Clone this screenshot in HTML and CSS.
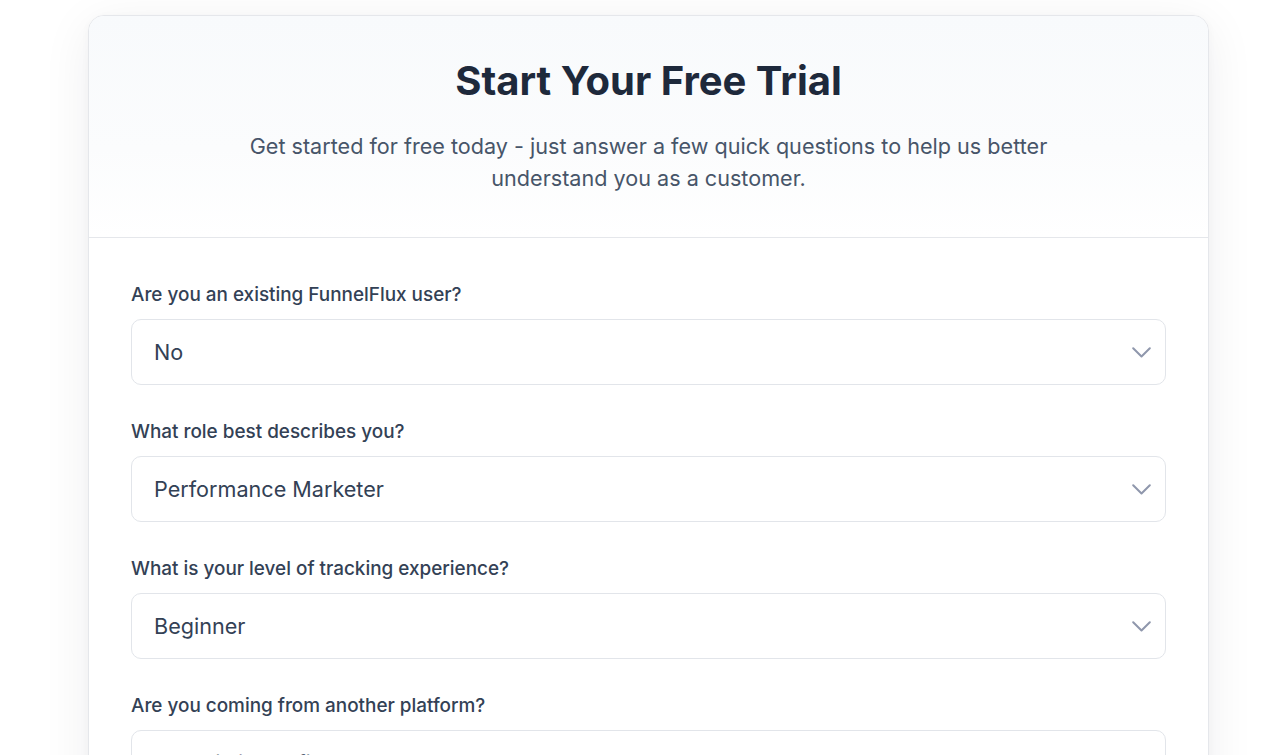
FILE: index.html
```html
<!DOCTYPE html>
<html lang="en">
<head>
<meta charset="utf-8">
<title>Start Your Free Trial</title>
<link rel="stylesheet" href="styles.css">
</head>
<body>
<div class="page">
  <div class="card">
    <header class="card-header">
      <h1 class="title">Start Your Free Trial</h1>
      <p class="subtitle">Get started for free today - just answer a few quick questions to help us better understand you as a customer.</p>
    </header>
    <form class="card-body">
      <div class="field">
        <label class="label" for="q1">Are you an existing FunnelFlux user?</label>
        <div class="select-wrap">
          <select id="q1" class="select">
            <option>No</option>
            <option>Yes</option>
          </select>
          <svg class="chevron" width="19" height="11" viewBox="0 0 19 11"><path d="M1.2 1.2 L9.5 9.5 L17.8 1.2" fill="none" stroke="currentColor" stroke-width="2" stroke-linecap="round" stroke-linejoin="round"/></svg>
        </div>
      </div>
      <div class="field">
        <label class="label" for="q2">What role best describes you?</label>
        <div class="select-wrap">
          <select id="q2" class="select">
            <option>Performance Marketer</option>
            <option>Agency</option>
          </select>
          <svg class="chevron" width="19" height="11" viewBox="0 0 19 11"><path d="M1.2 1.2 L9.5 9.5 L17.8 1.2" fill="none" stroke="currentColor" stroke-width="2" stroke-linecap="round" stroke-linejoin="round"/></svg>
        </div>
      </div>
      <div class="field">
        <label class="label" for="q3">What is your level of tracking experience?</label>
        <div class="select-wrap">
          <select id="q3" class="select">
            <option>Beginner</option>
            <option>Intermediate</option>
            <option>Advanced</option>
          </select>
          <svg class="chevron" width="19" height="11" viewBox="0 0 19 11"><path d="M1.2 1.2 L9.5 9.5 L17.8 1.2" fill="none" stroke="currentColor" stroke-width="2" stroke-linecap="round" stroke-linejoin="round"/></svg>
        </div>
      </div>
      <div class="field">
        <label class="label" for="q4">Are you coming from another platform?</label>
        <div class="select-wrap">
          <select id="q4" class="select">
            <option>No, this is my first tracker</option>
            <option>Yes</option>
          </select>
          <svg class="chevron" width="19" height="11" viewBox="0 0 19 11"><path d="M1.2 1.2 L9.5 9.5 L17.8 1.2" fill="none" stroke="currentColor" stroke-width="2" stroke-linecap="round" stroke-linejoin="round"/></svg>
        </div>
      </div>
    </form>
  </div>
</div>
</body>
</html>
```

FILE: styles.css
```css
* { box-sizing: border-box; }

html, body {
  margin: 0;
  padding: 0;
  background: #ffffff;
  font-family: "Inter", "Noto Sans", "Liberation Sans", sans-serif;
  color: #334155;
}

.page {
  padding: 15px 72px 40px 88px;
}

.card {
  background: #ffffff;
  border: 1px solid #e5e7eb;
  border-radius: 16px;
  box-shadow: 0 10px 50px rgba(15, 23, 42, 0.07), 0 2px 8px rgba(15, 23, 42, 0.03);
  overflow: hidden;
}

.card-header {
  padding: 45px 40px 43px;
  text-align: center;
  background: linear-gradient(180deg, #f8fafc 0%, #fbfcfd 60%, #ffffff 100%);
  border-bottom: 1px solid #e5e7eb;
}

.title {
  margin: 0;
  font-size: 40px;
  line-height: 40px;
  font-weight: 700;
  color: #1e293b;
}

.subtitle {
  margin: 29px auto 0;
  max-width: 850px;
  font-size: 21.6px;
  line-height: 32px;
  color: #475569;
}

.card-body {
  padding: 43px 42px 40px;
  display: flex;
  flex-direction: column;
}

.field {
  display: flex;
  flex-direction: column;
  margin-bottom: 33px;
}

.label {
  font-size: 18.9px;
  line-height: 27px;
  font-weight: 500;
  color: #334155;
  margin-bottom: 11px;
}

.select-wrap {
  position: relative;
}

.select {
  -webkit-appearance: none;
  appearance: none;
  width: 100%;
  height: 66px;
  padding: 0 50px 0 22px;
  font-family: inherit;
  font-size: 21.6px;
  color: #334155;
  background: #ffffff;
  border: 1px solid #e2e5ea;
  border-radius: 10px;
  outline: none;
}

.chevron {
  position: absolute;
  right: 15px;
  top: 28px;
  color: #8f97ac;
  pointer-events: none;
}
```
